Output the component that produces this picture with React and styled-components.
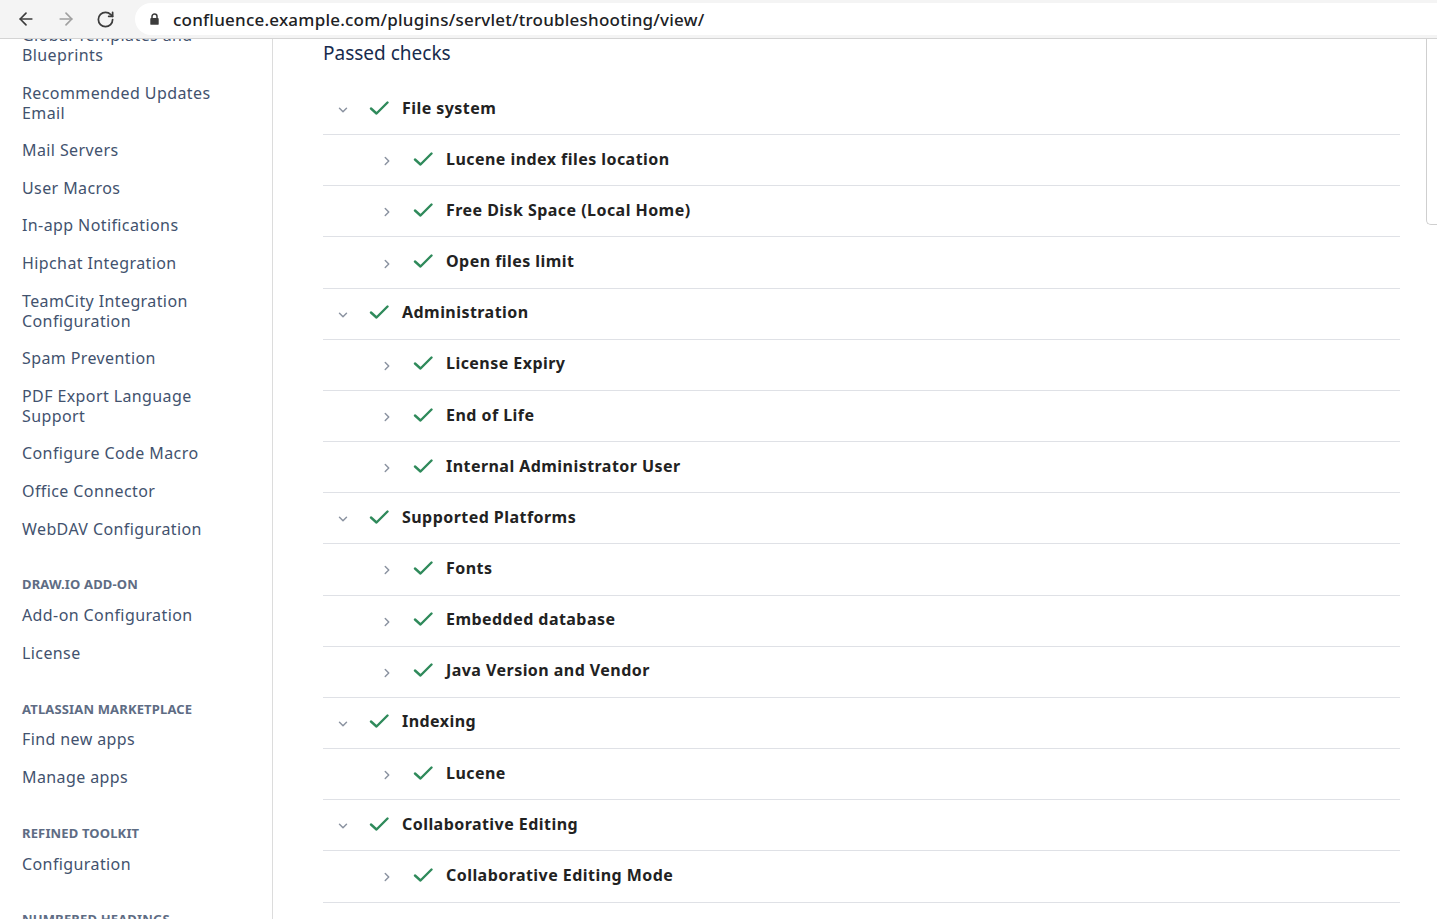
import React from 'react';
import styled, { createGlobalStyle } from 'styled-components';
import { ArrowLeft, ArrowRight, RotateCw, ChevronDown, ChevronRight } from 'lucide-react';

const GlobalStyle = createGlobalStyle`
  html, body { margin: 0; padding: 0; background: #fff; }
  body { font-family: "Noto Sans", "Open Sans", sans-serif; overflow: hidden; }
  * { box-sizing: border-box; }
`;

const Window = styled.div`
  width: 1437px;
  height: 919px;
  display: flex;
  flex-direction: column;
  overflow: hidden;
  position: relative;
`;

const BrowserBar = styled.div`
  height: 39px;
  flex: none;
  display: flex;
  align-items: center;
  background: #f4f4f4;
  border-bottom: 1px solid #d4d4d4;
  padding-left: 14px;
`;

const NavButton = styled.div`
  width: 40px;
  height: 30px;
  display: flex;
  align-items: center;
  justify-content: flex-start;
  padding-left: 2px;
  color: ${p => (p.$disabled ? '#a0a0a0' : '#3c3c3c')};
`;

const UrlPill = styled.div`
  flex: 1;
  height: 32px;
  margin-left: 1px;
  margin-right: -20px;
  background: #fff;
  border-radius: 16px;
  display: flex;
  align-items: center;
  padding-left: 15px;
  gap: 14px;
`;

const UrlText = styled.span`
  font-family: "Noto Sans", sans-serif;
  font-size: 17px;
  font-weight: 500;
  color: #202124;
  letter-spacing: 0.22px;
`;

const Viewport = styled.div`
  flex: 1;
  display: flex;
  overflow: hidden;
  position: relative;
`;

const Sidebar = styled.nav`
  width: 273px;
  flex: none;
  border-right: 1px solid #dcdcdc;
  padding-left: 22px;
  overflow: hidden;
`;

const SideList = styled.div`
  margin-top: -22.8px;
  display: flex;
  flex-direction: column;
`;

const SideItem = styled.a`
  display: block;
  padding: 8.8px 0;
  font-size: 16px;
  line-height: 20px;
  color: #42526e;
  text-decoration: none;
  letter-spacing: 0.4px;
  max-width: 215px;
`;

const SideHeading = styled.div`
  padding: 29px 0 4px;
  font-size: 13px;
  line-height: 16px;
  font-weight: 700;
  color: #5e6c84;
  text-transform: uppercase;
  letter-spacing: 0.15px;
`;

const Main = styled.main`
  flex: 1;
  padding: 0 37px 0 50px;
  overflow: hidden;
`;

const Title = styled.h2`
  margin: 0;
  font-size: 19px;
  line-height: 28px;
  font-weight: 400;
  color: #172b4d;
`;

const Checks = styled.div`
  margin-top: 17px;
  display: flex;
  flex-direction: column;
`;

const Row = styled.div`
  height: 51.17px;
  display: flex;
  align-items: center;
  border-bottom: 1px solid #dfe1e6;
  padding-left: ${p => (p.$child ? '56px' : '12px')};
  padding-bottom: 3px;
`;

const Toggle = styled.span`
  width: 16px;
  display: flex;
  justify-content: center;
  color: #8b93a1;
  margin-top: 5px;
`;

const CheckMark = styled.svg`
  margin-left: 18px;
  width: 20px;
  height: 16px;
  flex: none;
`;

const RowLabel = styled.span`
  margin-left: 13px;
  font-size: 16px;
  font-weight: 700;
  color: #222;
  letter-spacing: 0.45px;
`;

const SidePanelEdge = styled.div`
  position: absolute;
  left: 1426px;
  top: 0;
  width: 30px;
  height: 186px;
  border-left: 1px solid #cfcfcf;
  border-bottom: 1px solid #cfcfcf;
  border-bottom-left-radius: 5px;
`;

const LockIcon = () => (
  <svg width="9" height="12" viewBox="0 0 9 12">
    <path d="M2 5.2V3.6a2.5 2.5 0 0 1 5 0v1.6" fill="none" stroke="#3c3c3c" strokeWidth="1.5" />
    <rect x="0.3" y="5" width="8.4" height="6.8" rx="0.9" fill="#3c3c3c" />
  </svg>
);

const Check = () => (
  <CheckMark viewBox="0 0 20 16">
    <polyline points="2,8.5 7.5,13.5 18.5,2.5" fill="none" stroke="#2f8a5b" strokeWidth="2.4" strokeLinecap="round" strokeLinejoin="round" />
  </CheckMark>
);

const sidebar = [
  { type: 'item', label: 'Global Templates and Blueprints' },
  { type: 'item', label: 'Recommended Updates Email' },
  { type: 'item', label: 'Mail Servers' },
  { type: 'item', label: 'User Macros' },
  { type: 'item', label: 'In-app Notifications' },
  { type: 'item', label: 'Hipchat Integration' },
  { type: 'item', label: 'TeamCity Integration Configuration' },
  { type: 'item', label: 'Spam Prevention' },
  { type: 'item', label: 'PDF Export Language Support' },
  { type: 'item', label: 'Configure Code Macro' },
  { type: 'item', label: 'Office Connector' },
  { type: 'item', label: 'WebDAV Configuration' },
  { type: 'head', label: 'Draw.io add-on' },
  { type: 'item', label: 'Add-on Configuration' },
  { type: 'item', label: 'License' },
  { type: 'head', label: 'Atlassian Marketplace' },
  { type: 'item', label: 'Find new apps' },
  { type: 'item', label: 'Manage apps' },
  { type: 'head', label: 'Refined Toolkit' },
  { type: 'item', label: 'Configuration' },
  { type: 'head', label: 'Numbered Headings' },
  { type: 'item', label: 'Configuration' },
];

const groups = [
  { name: 'File system', items: ['Lucene index files location', 'Free Disk Space (Local Home)', 'Open files limit'] },
  { name: 'Administration', items: ['License Expiry', 'End of Life', 'Internal Administrator User'] },
  { name: 'Supported Platforms', items: ['Fonts', 'Embedded database', 'Java Version and Vendor'] },
  { name: 'Indexing', items: ['Lucene'] },
  { name: 'Collaborative Editing', items: ['Collaborative Editing Mode'] },
];

export default function App() {
  return (
    <Window>
      <GlobalStyle />
      <BrowserBar>
        <NavButton><ArrowLeft size={20} strokeWidth={2} /></NavButton>
        <NavButton $disabled><ArrowRight size={20} strokeWidth={2} /></NavButton>
        <NavButton><RotateCw size={19} strokeWidth={2.2} /></NavButton>
        <UrlPill>
          <LockIcon />
          <UrlText>confluence.example.com/plugins/servlet/troubleshooting/view/</UrlText>
        </UrlPill>
      </BrowserBar>
      <Viewport>
        <Sidebar>
          <SideList>
            {sidebar.map((s, i) =>
              s.type === 'head' ? (
                <SideHeading key={i}>{s.label}</SideHeading>
              ) : (
                <SideItem key={i} href="#">{s.label}</SideItem>
              )
            )}
          </SideList>
        </Sidebar>
        <Main>
          <Title>Passed checks</Title>
          <Checks>
            {groups.map(g => (
              <React.Fragment key={g.name}>
                <Row>
                  <Toggle><ChevronDown size={14} strokeWidth={2.5} /></Toggle>
                  <Check />
                  <RowLabel>{g.name}</RowLabel>
                </Row>
                {g.items.map(it => (
                  <Row $child key={it}>
                    <Toggle><ChevronRight size={14} strokeWidth={2.5} /></Toggle>
                    <Check />
                    <RowLabel>{it}</RowLabel>
                  </Row>
                ))}
              </React.Fragment>
            ))}
          </Checks>
        </Main>
        <SidePanelEdge />
      </Viewport>
    </Window>
  );
}
